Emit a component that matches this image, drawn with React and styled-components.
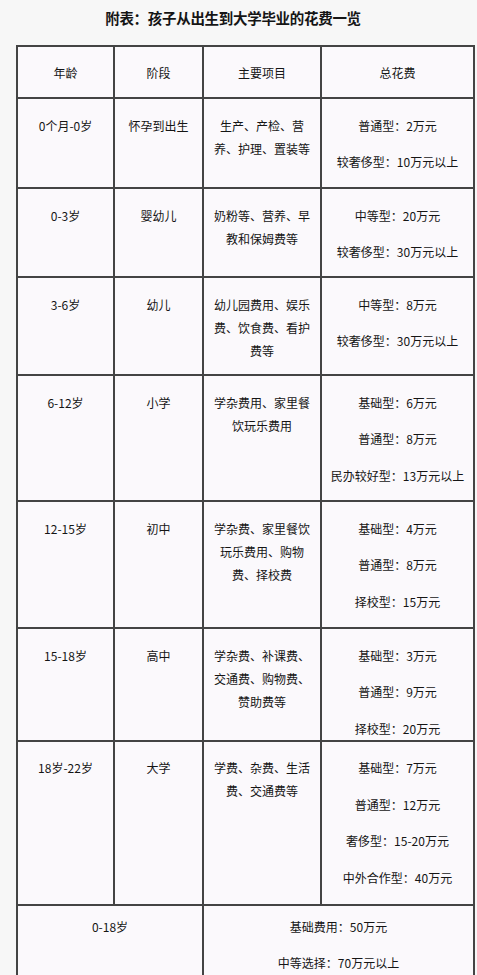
import React from "react";
import styled, { createGlobalStyle } from "styled-components";

const Global = createGlobalStyle`
  html, body { margin: 0; padding: 0; }
  body {
    background: #f7f7f7;
    font-family: "Noto Sans CJK SC", "Noto Sans", sans-serif;
    color: #1a1a1a;
  }
`;

const Page = styled.div`
  width: 477px;
  padding: 0 5px 0 16px;
  box-sizing: border-box;
`;

const Title = styled.h1`
  margin: 0;
  height: 45px;
  padding: 6px 22px 0 0;
  box-sizing: border-box;
  font-size: 14.5px;
  line-height: 24px;
  font-weight: 700;
  letter-spacing: -0.3px;
  text-align: center;
  color: #151515;
`;

const Table = styled.table`
  width: 457px;
  border-collapse: collapse;
  table-layout: fixed;
  background: #fbf9fc;
`;

const Col = styled.col`
  width: ${(p) => p.$w}px;
`;

const Row = styled.tr`
  height: ${(p) => p.$h}px;
`;

const HeadCell = styled.th`
  border: 2px solid #444;
  font-size: 12px;
  font-weight: 400;
  color: #151515;
  text-align: center;
  vertical-align: middle;
  padding: 0;
`;

const Cell = styled.td`
  border: 2px solid #444;
  font-size: 12px;
  line-height: 23px;
  color: #151515;
  text-align: center;
  vertical-align: top;
  padding: ${(p) => (p.$summary ? 9 : 14.5)}px 8px 0;
  box-sizing: border-box;
`;

const Item = styled.div`
  white-space: nowrap;
  & + & { margin-top: 13.5px; }
`;

const rows = [
  { h: 90, age: "0个月-0岁", stage: "怀孕到出生", items: "生产、产检、营养、护理、置装等", cost: ["普通型：2万元", "较奢侈型：10万元以上"] },
  { h: 89, age: "0-3岁", stage: "婴幼儿", items: "奶粉等、营养、早教和保姆费等", cost: ["中等型：20万元", "较奢侈型：30万元以上"] },
  { h: 98, age: "3-6岁", stage: "幼儿", items: "幼儿园费用、娱乐费、饮食费、看护费等", cost: ["中等型：8万元", "较奢侈型：30万元以上"] },
  { h: 126, age: "6-12岁", stage: "小学", items: "学杂费用、家里餐饮玩乐费用", cost: ["基础型：6万元", "普通型：8万元", "民办较好型：13万元以上"] },
  { h: 127, age: "12-15岁", stage: "初中", items: "学杂费、家里餐饮玩乐费用、购物费、择校费", cost: ["基础型：4万元", "普通型：8万元", "择校型：15万元"] },
  { h: 111, age: "15-18岁", stage: "高中", items: "学杂费、补课费、交通费、购物费、赞助费等", cost: ["基础型：3万元", "普通型：9万元", "择校型：20万元"] },
  { h: 164, age: "18岁-22岁", stage: "大学", items: "学费、杂费、生活费、交通费等", cost: ["基础型：7万元", "普通型：12万元", "奢侈型：15-20万元", "中外合作型：40万元"] },
];

export default function App() {
  return (
    <Page>
      <Global />
      <Title>附表：孩子从出生到大学毕业的花费一览</Title>
      <Table>
        <colgroup>
          <Col $w={97} />
          <Col $w={89} />
          <Col $w={118} />
          <Col $w={153} />
        </colgroup>
        <thead>
          <Row $h={52}>
            <HeadCell>年龄</HeadCell>
            <HeadCell>阶段</HeadCell>
            <HeadCell>主要项目</HeadCell>
            <HeadCell>总花费</HeadCell>
          </Row>
        </thead>
        <tbody>
          {rows.map((r) => (
            <Row key={r.age} $h={r.h}>
              <Cell>{r.age}</Cell>
              <Cell>{r.stage}</Cell>
              <Cell>{r.items}</Cell>
              <Cell>
                {r.cost.map((c) => (
                  <Item key={c}>{c}</Item>
                ))}
              </Cell>
            </Row>
          ))}
          <Row $h={100}>
            <Cell $summary colSpan={2}>0-18岁</Cell>
            <Cell $summary colSpan={2}>
              <Item>基础费用：50万元</Item>
              <Item>中等选择：70万元以上</Item>
            </Cell>
          </Row>
        </tbody>
      </Table>
    </Page>
  );
}
